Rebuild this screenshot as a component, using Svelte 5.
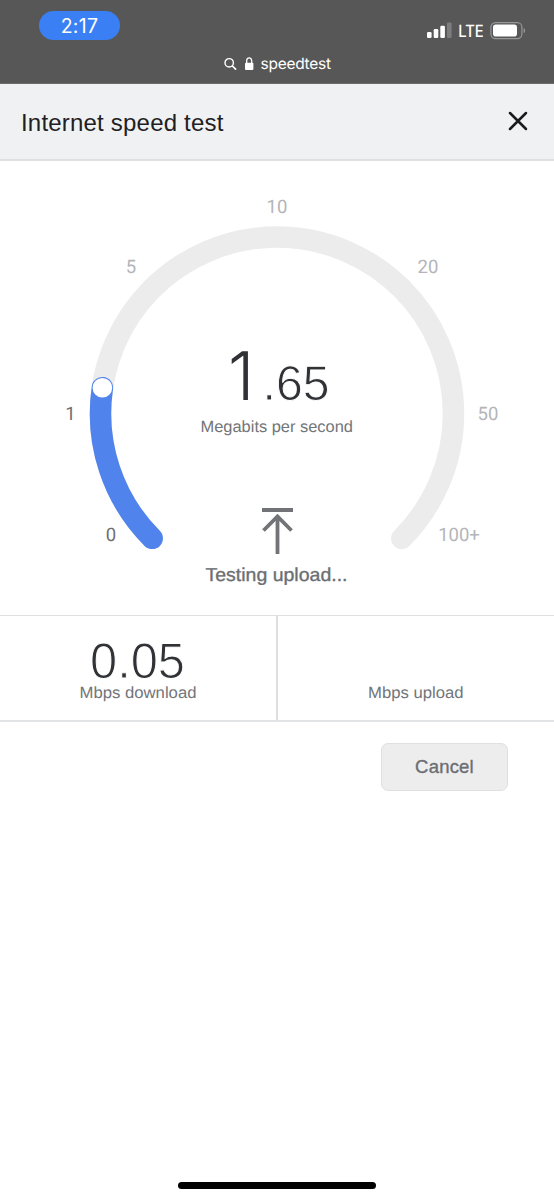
<script lang="ts">
	const cx = 277;
	const cy = 253.5;
	const radius = 176.5;

	const ticks = [
		{ label: '0', x: 111, y: 381, reached: true },
		{ label: '1', x: 70.5, y: 260, reached: true },
		{ label: '5', x: 131, y: 113, reached: false },
		{ label: '10', x: 277, y: 53, reached: false },
		{ label: '20', x: 428, y: 113, reached: false },
		{ label: '50', x: 488, y: 260, reached: false },
		{ label: '100+', x: 459, y: 381, reached: false }
	];

	// Angles are in degrees, clockwise from the positive x axis
	const point = (angle: number) => {
		const rad = (angle * Math.PI) / 180;
		return { x: cx + radius * Math.cos(rad), y: cy + radius * Math.sin(rad) };
	};

	const arc = (from: number, to: number) => {
		const a = point(from);
		const b = point(to);
		const large = to - from > 180 ? 1 : 0;
		return `M${a.x} ${a.y} A${radius} ${radius} 0 ${large} 1 ${b.x} ${b.y}`;
	};

	const current = 188.4;
	const knob = point(current);
</script>

<div class="screen">
	<div class="browser">
		<div class="status">
			<div class="time"><span>2:17</span></div>
			<svg class="signal" width="100" height="22" viewBox="0 0 100 22">
				<rect x="0" y="10" width="4.6" height="6" rx="1.2" fill="#fff" />
				<rect x="6.7" y="7" width="4.6" height="9" rx="1.2" fill="#fff" />
				<rect x="13.3" y="3.8" width="4.6" height="12.2" rx="1.2" fill="#fff" />
				<rect x="20" y="0.4" width="4.6" height="15.6" rx="1.2" fill="#7d7d7d" />
				<text x="31.2" y="15" textLength="25.5" lengthAdjust="spacingAndGlyphs">LTE</text>
				<rect x="63.9" y="0.6" width="31" height="16" rx="4.6" fill="none" stroke="#989898" stroke-width="1.2" />
				<rect x="66" y="2.6" width="24" height="12" rx="2.8" fill="#fff" />
				<path d="M96.6 6v5.2c2-.8 2-4.4 0-5.2z" fill="#989898" />
			</svg>
		</div>
		<div class="address">
			<svg width="30" height="16" viewBox="0 0 30 16">
				<circle cx="5.2" cy="6.8" r="4.2" fill="none" stroke="#fff" stroke-width="1.4" />
				<path d="M8.4 10l3.2 3.2" stroke="#fff" stroke-width="1.7" stroke-linecap="round" />
				<rect x="21" y="6.8" width="8.4" height="7.2" rx="1" fill="#fff" />
				<path d="M22.7 7.4V4.8a2.5 2.9 0 0 1 5 0v2.6" fill="none" stroke="#fff" stroke-width="1.3" />
			</svg>
			<svg width="72" height="22" viewBox="0 0 72 22">
				<text class="url" x="0.5" y="16" textLength="70.5">speedtest</text>
			</svg>
		</div>
	</div>

	<header>
		<h1>Internet speed test</h1>
		<button class="close" aria-label="Close">
			<svg width="20" height="20" viewBox="0 0 20 20">
				<path d="M2 2l16 16M18 2L2 18" stroke="#1b1b1d" stroke-width="2.5" stroke-linecap="round" />
			</svg>
		</button>
	</header>

	<svg class="gauge" width="554" height="454" viewBox="0 0 554 454">
		<path class="track" d={arc(135, 405)} />
		<path class="progress" d={arc(135, current)} />
		<circle cx={knob.x} cy={knob.y} r="9.8" fill="#fff" />

		{#each ticks as tick}
			<text class="tick" class:reached={tick.reached} x={tick.x} y={tick.y}>{tick.label}</text>
		{/each}

		<text class="whole" x="228" y="240">1</text>
		<text class="fraction" x="262.5" y="240" textLength="67" lengthAdjust="spacingAndGlyphs">.65</text>
		<text class="unit" x="200.5" y="271.5" textLength="152.5" lengthAdjust="spacingAndGlyphs">Megabits per second</text>

		<path class="arrow" d="M262 350h31M277.5 394v-36M263.5 370.5l14-14 14 14" />
		<text class="state" x="205.5" y="421" textLength="142" lengthAdjust="spacingAndGlyphs">Testing upload...</text>
	</svg>

	<section class="results">
		<div class="result">
			<svg width="120" height="90" viewBox="0 0 120 90">
				<text class="value" x="12" y="62" textLength="95" lengthAdjust="spacingAndGlyphs">0.05</text>
				<text class="caption" x="1.5" y="82" textLength="117" lengthAdjust="spacingAndGlyphs">Mbps download</text>
			</svg>
		</div>
		<div class="result">
			<svg width="120" height="90" viewBox="0 0 120 90">
				<text class="caption" x="12" y="82" textLength="95.5" lengthAdjust="spacingAndGlyphs">Mbps upload</text>
			</svg>
		</div>
	</section>

	<div class="actions">
		<button class="cancel">Cancel</button>
	</div>

	<div class="home"></div>
</div>

<style>
	:global(body) {
		background: #fff;
	}

	.screen {
		width: 554px;
		height: 1200px;
		display: flex;
		flex-direction: column;
		overflow: hidden;
		background: #fff;
		font-family: 'Liberation Sans', Arial, sans-serif;
	}

	svg {
		display: block;
		flex: none;
		overflow: visible;
	}

	text {
		text-rendering: geometricPrecision;
	}

	button {
		font: inherit;
		border: none;
		background: none;
		padding: 0;
	}

	.browser {
		height: 84px;
		box-sizing: border-box;
		flex: none;
		background: #575757;
		border-bottom: 1px solid #6c6c6c;
		font-family: Inter, sans-serif;
	}

	.status {
		display: flex;
		justify-content: space-between;
		align-items: flex-start;
		height: 52px;
		box-sizing: border-box;
		padding: 11px 27px 0 39px;
	}

	.time {
		width: 81px;
		height: 29px;
		border-radius: 15px;
		background: #3b7ff5;
		color: #fff;
		font-size: 19.5px;
		font-weight: 400;
		line-height: 30px;
		text-align: center;
		letter-spacing: 0.3px;
	}

	.signal {
		margin-top: 11px;
	}

	.signal text {
		fill: #fff;
		font-size: 17px;
		font-weight: 500;
	}

	.address {
		display: flex;
		align-items: center;
		gap: 6px;
		padding-left: 224px;
		height: 24px;
	}

	.url {
		fill: #fff;
		font-size: 15.5px;
	}

	header {
		display: flex;
		align-items: center;
		justify-content: space-between;
		flex: none;
		height: 77px;
		box-sizing: border-box;
		padding: 0 26px 2px 21px;
		background: #f0f1f3;
		border-bottom: 2px solid #dfe0e2;
	}

	h1 {
		margin: 5px 0 0;
		font-size: 24px;
		font-weight: 400;
		letter-spacing: 0.2px;
		color: #1f2023;
	}

	.gauge {
		margin-top: -1px;
	}

	.track,
	.progress {
		fill: none;
		stroke: #ececec;
		stroke-width: 21.5;
		stroke-linecap: round;
	}

	.progress {
		stroke: #5083ec;
	}

	.tick {
		fill: #b3b5b9;
		font-family: Roboto, sans-serif;
		font-size: 18.5px;
		text-anchor: middle;
	}

	.tick.reached {
		fill: #6d6f73;
	}

	/* The outline in the page colour thins the strokes of the large digits */
	.fraction,
	.value {
		fill: #303236;
		stroke: #fff;
	}

	.whole {
		fill: #303236;
		font-family: Inter, sans-serif;
		font-size: 67px;
		font-weight: 300;
	}

	.fraction {
		font-size: 49px;
		stroke-width: 0.9;
	}

	.value {
		font-size: 50px;
		stroke-width: 1;
	}

	.unit,
	.caption {
		fill: #727579;
		font-size: 16.2px;
	}

	.arrow {
		fill: none;
		stroke: #727377;
		stroke-width: 3.8;
	}

	.state {
		fill: #6b6e72;
		stroke: #6b6e72;
		stroke-width: 0.35;
		font-size: 18.7px;
	}

	.results {
		display: flex;
		flex: none;
		height: 107px;
		margin-top: 1px;
		box-sizing: border-box;
		border-top: 1px solid #dedfe0;
		border-bottom: 2px solid #e2e3e4;
	}

	.result {
		flex: 1;
		display: flex;
		justify-content: center;
	}

	.result:first-child {
		border-right: 2px solid #dedfe0;
	}

	.actions {
		display: flex;
		justify-content: flex-end;
		padding: 21px 46px 0 0;
	}

	.cancel {
		width: 127px;
		height: 48px;
		border: 1px solid #dfe0e2;
		border-radius: 7px;
		background: #ededee;
		color: #6b6e72;
		font-size: 18.5px;
		letter-spacing: 0.2px;
		-webkit-text-stroke: 0.35px #6b6e72;
	}

	.home {
		width: 198px;
		height: 7px;
		margin: auto auto 11px;
		border-radius: 4px;
		background: #000;
	}
</style>
